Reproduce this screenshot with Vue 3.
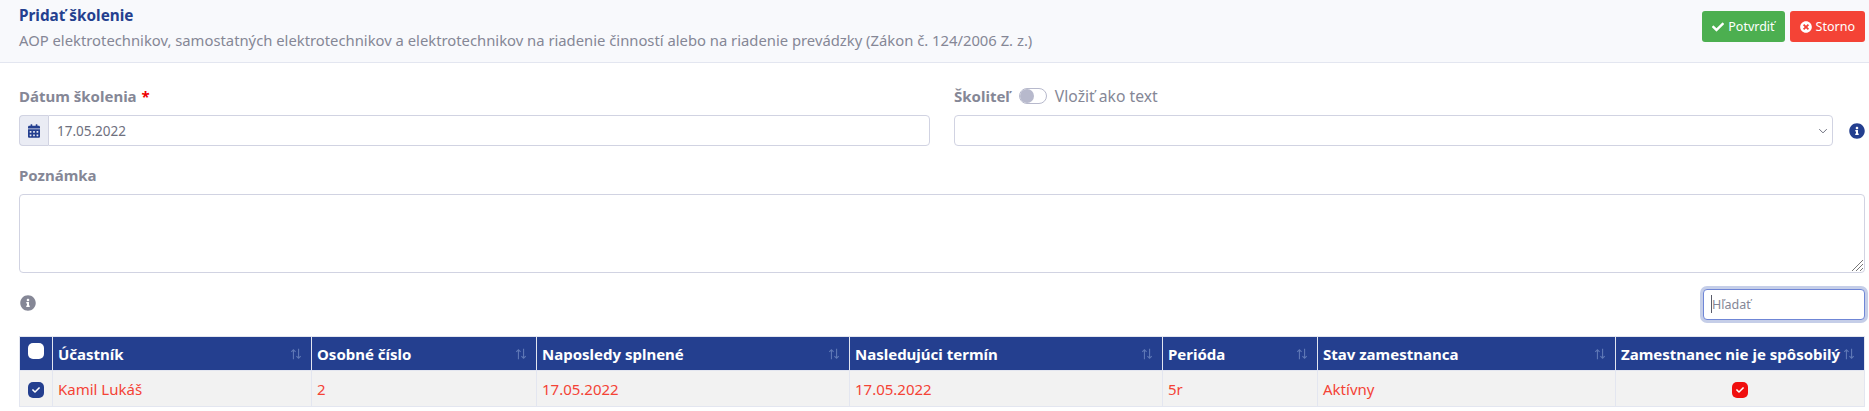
<script setup>
const icons = {
  check: "M173.898 439.404l-166.4-166.4c-9.997-9.997-9.997-26.206 0-36.204l36.203-36.204c9.997-9.998 26.207-9.998 36.204 0L192 312.69 432.095 72.596c9.997-9.997 26.207-9.997 36.204 0l36.203 36.204c9.997 9.997 9.997 26.206 0 36.204l-294.4 294.401c-9.998 9.997-26.207 9.997-36.204-.001z",
  times: "M256 8C119 8 8 119 8 256s111 248 248 248 248-111 248-248S393 8 256 8zm121.6 313.1c4.7 4.7 4.7 12.3 0 17L338 377.6c-4.7 4.7-12.3 4.7-17 0L256 312l-65.1 65.6c-4.7 4.7-12.3 4.7-17 0L134.4 338c-4.7-4.7-4.7-12.3 0-17l65.6-65-65.6-65.1c-4.7-4.7-4.7-12.3 0-17l39.6-39.6c4.7-4.7 12.3-4.7 17 0l65 65.7 65.1-65.6c4.7-4.7 12.3-4.7 17 0l39.6 39.6c4.7 4.7 4.7 12.3 0 17L312 256l65.6 65.1z",
  info: "M256 8C119.043 8 8 119.083 8 256c0 136.997 111.043 248 248 248s248-111.003 248-248C504 119.083 392.957 8 256 8zm0 110c23.196 0 42 18.804 42 42s-18.804 42-42 42-42-18.804-42-42 18.804-42 42-42zm56 254c0 6.627-5.373 12-12 12h-88c-6.627 0-12-5.373-12-12v-24c0-6.627 5.373-12 12-12h12v-64h-12c-6.627 0-12-5.373-12-12v-24c0-6.627 5.373-12 12-12h64c6.627 0 12 5.373 12 12v100h12c6.627 0 12 5.373 12 12v24z",
  calendar: "M0 464c0 26.5 21.5 48 48 48h352c26.5 0 48-21.5 48-48V192H0v272zm320-196c0-6.6 5.4-12 12-12h40c6.6 0 12 5.4 12 12v40c0 6.6-5.4 12-12 12h-40c-6.6 0-12-5.4-12-12v-40zm0 128c0-6.6 5.4-12 12-12h40c6.6 0 12 5.4 12 12v40c0 6.6-5.4 12-12 12h-40c-6.6 0-12-5.4-12-12v-40zM192 268c0-6.6 5.4-12 12-12h40c6.6 0 12 5.4 12 12v40c0 6.6-5.4 12-12 12h-40c-6.6 0-12-5.4-12-12v-40zm0 128c0-6.6 5.4-12 12-12h40c6.6 0 12 5.4 12 12v40c0 6.6-5.4 12-12 12h-40c-6.6 0-12-5.4-12-12v-40zM64 268c0-6.6 5.4-12 12-12h40c6.6 0 12 5.4 12 12v40c0 6.6-5.4 12-12 12H76c-6.6 0-12-5.4-12-12v-40zm0 128c0-6.6 5.4-12 12-12h40c6.6 0 12 5.4 12 12v40c0 6.6-5.4 12-12 12H76c-6.6 0-12-5.4-12-12v-40zM400 64h-48V16c0-8.8-7.2-16-16-16h-32c-8.8 0-16 7.2-16 16v48H160V16c0-8.8-7.2-16-16-16h-32c-8.8 0-16 7.2-16 16v48H48C21.5 64 0 85.5 0 112v48h448v-48c0-26.5-21.5-48-48-48z",
};

const columns = [
  { label: "Účastník", width: 259 },
  { label: "Osobné číslo", width: 225 },
  { label: "Naposledy splnené", width: 313 },
  { label: "Nasledujúci termín", width: 313 },
  { label: "Perióda", width: 155 },
  { label: "Stav zamestnanca", width: 298 },
  { label: "Zamestnanec nie je spôsobilý", width: 249 },
];

const row = ["Kamil Lukáš", "2", "17.05.2022", "17.05.2022", "5r", "Aktívny"];
</script>

<template>
  <div class="page">
    <header class="head">
      <div>
        <h1>Pridať školenie</h1>
        <p>AOP elektrotechnikov, samostatných elektrotechnikov a elektrotechnikov na riadenie činností alebo na riadenie prevádzky (Zákon č. 124/2006 Z. z.)</p>
      </div>
      <div class="actions">
        <button class="btn green">
          <svg viewBox="0 0 512 512"><path :d="icons.check" /></svg>Potvrdiť
        </button>
        <button class="btn red">
          <svg viewBox="0 0 512 512"><path :d="icons.times" /></svg>Storno
        </button>
      </div>
    </header>

    <section class="form">
      <div class="cols">
        <div class="field">
          <label class="lbl">Dátum školenia <span class="req">*</span></label>
          <div class="group">
            <span class="addon">
              <svg viewBox="0 0 448 512"><path :d="icons.calendar" /></svg>
            </span>
            <input class="ctl date" type="text" value="17.05.2022" />
          </div>
        </div>
        <div class="field">
          <div class="lbl">
            <label>Školiteľ</label>
            <span class="toggle"><i></i></span>
            <span class="hint">Vložiť ako text</span>
          </div>
          <div class="sel-row">
            <div class="sel">
              <select class="ctl"></select>
              <svg class="chev" viewBox="0 0 16 16"><path d="M2 5l6 6 6-6" /></svg>
            </div>
            <svg class="info blue" viewBox="0 0 512 512"><path :d="icons.info" /></svg>
          </div>
        </div>
      </div>

      <div class="note">
        <label class="lbl">Poznámka</label>
        <div class="area-wrap">
          <textarea class="ctl area"></textarea>
          <svg class="grip" viewBox="0 0 14 14">
            <path d="M13 2L2 13M13 6l-7 7M13 10l-3 3" />
          </svg>
        </div>
      </div>

      <div class="tools">
        <svg class="info gray" viewBox="0 0 512 512"><path :d="icons.info" /></svg>
        <div class="find-wrap">
          <input class="ctl find" type="text" placeholder="Hľadať" />
          <span class="caret"></span>
        </div>
      </div>

      <table>
        <colgroup>
          <col style="width: 33px" />
          <col v-for="c in columns" :key="c.label" :style="{ width: c.width + 'px' }" />
        </colgroup>
        <thead>
          <tr>
            <th class="chk"><span class="box white"></span></th>
            <th v-for="c in columns" :key="c.label">
              <div class="th">
                <span>{{ c.label }}</span>
                <svg class="sort" viewBox="0 0 14 14">
                  <path d="M4 13V2M1.5 4.5L4 2l2.5 2.5" />
                  <path d="M10 1v11M7.5 9.5L10 12l2.5-2.5" />
                </svg>
              </div>
            </th>
          </tr>
        </thead>
        <tbody>
          <tr>
            <td class="chk">
              <span class="box navy"><svg viewBox="0 0 512 512"><path :d="icons.check" /></svg></span>
            </td>
            <td v-for="(v, i) in row" :key="i">{{ v }}</td>
            <td class="center">
              <span class="box danger"><svg viewBox="0 0 512 512"><path :d="icons.check" /></svg></span>
            </td>
          </tr>
        </tbody>
      </table>
    </section>
  </div>
</template>

<style>
html,
body {
  margin: 0;
  background: #fff;
  overflow: hidden;
}
</style>

<style scoped>
.page {
  font-family: "Noto Sans", "Open Sans", sans-serif;
  font-size: 15px;
  color: #858796;
}

.head {
  display: flex;
  justify-content: space-between;
  height: 63px;
  box-sizing: border-box;
  padding: 4px 4px 0 19px;
  background: #f8f9fc;
  border-bottom: 1px solid #e3e6f0;
}

.head h1 {
  margin: 0;
  font-size: 15.3px;
  line-height: 22px;
  font-weight: 700;
  color: #243f8f;
}

.head p {
  margin: 3px 0 0;
  font-size: 14.8px;
  line-height: 22px;
  color: #858796;
}

.actions {
  display: flex;
  gap: 5px;
  padding-top: 7px;
}

.btn {
  display: flex;
  align-items: center;
  gap: 4px;
  height: 31px;
  padding: 0 10px;
  border: 0;
  border-radius: 3px;
  color: #fff;
  font: inherit;
  font-size: 12.5px;
}

.btn svg {
  width: 12px;
  height: 12px;
  fill: #fff;
}

.green {
  background: #4caf50;
}

.red {
  background: #f44336;
}

.form {
  padding: 22px 4px 0 19px;
}

.cols {
  display: grid;
  grid-template-columns: 911px 1fr;
  gap: 24px;
}

.lbl {
  display: flex;
  align-items: center;
  gap: 5px;
  height: 22px;
  margin-bottom: 8px;
  font-weight: 700;
  color: #858796;
}

.req {
  color: #e00;
}

.hint {
  margin-left: 3px;
  font-weight: 400;
  font-size: 15.7px;
}

.toggle {
  display: block;
  width: 28px;
  height: 16px;
  margin-left: 4px;
  box-sizing: border-box;
  border: 1px solid #b7b9cc;
  border-radius: 8px;
  background: #fff;
}

.toggle i {
  display: block;
  width: 14px;
  height: 14px;
  border-radius: 50%;
  background: #b7b9cc;
}

.ctl {
  display: block;
  box-sizing: border-box;
  width: 100%;
  height: 31px;
  padding: 0 8px;
  border: 1px solid #d1d3e2;
  border-radius: 4px;
  background: #fff;
  color: #6e707e;
  font: inherit;
  font-size: 13.5px;
  outline: none;
}

.group {
  display: flex;
}

.addon {
  display: flex;
  align-items: center;
  justify-content: center;
  flex: none;
  width: 29px;
  height: 31px;
  box-sizing: border-box;
  border: 1px solid #d1d3e2;
  border-right: 0;
  border-radius: 4px 0 0 4px;
  background: #eaecf4;
}

.addon svg {
  width: 12px;
  height: 14px;
  fill: #243f8f;
}

.date {
  border-radius: 0 4px 4px 0;
}

.sel-row {
  display: flex;
  align-items: center;
  justify-content: space-between;
}

.sel {
  position: relative;
  width: 879px;
}

.sel select {
  appearance: none;
}

.chev {
  position: absolute;
  right: 5px;
  top: 11px;
  width: 10px;
  height: 10px;
  fill: none;
  stroke: #6e707e;
  stroke-width: 1.6;
}

.info {
  width: 16px;
  height: 16px;
}

.blue {
  fill: #243f8f;
}

.gray {
  fill: #858796;
}

.note {
  margin-top: 18px;
}

.area-wrap {
  position: relative;
  margin-top: 8px;
}

.note .lbl {
  margin-bottom: 0;
}

.area {
  height: 79px;
  padding: 6px 8px;
  resize: none;
}

.grip {
  position: absolute;
  right: 1px;
  bottom: 1px;
  width: 14px;
  height: 14px;
  fill: none;
  stroke: #777;
  stroke-width: 1;
}

.tools {
  display: flex;
  align-items: flex-start;
  justify-content: space-between;
  height: 47px;
  margin-top: 16px;
  padding-left: 1px;
}

.tools .info {
  margin-top: 6px;
}

.find-wrap {
  position: relative;
  width: 162px;
}

.find {
  height: 31px;
  font-size: 12.5px;
  border-color: #6f86d6;
  box-shadow: 0 0 0 3px #c5cee8;
}

.find::placeholder {
  color: #858796;
  opacity: 1;
}

.caret {
  position: absolute;
  left: 8px;
  top: 6px;
  width: 1px;
  height: 18px;
  background: #5a5c69;
}

table {
  table-layout: fixed;
  width: 1845px;
  border-collapse: collapse;
  font-size: 15px;
}

th {
  height: 34px;
  padding: 0 9px 0 5px;
  box-sizing: border-box;
  background: #243f8f;
  border: 1px solid #e3e6f0;
  color: #fff;
  font-weight: 700;
  text-align: left;
  white-space: nowrap;
}

.th {
  display: flex;
  align-items: center;
  justify-content: space-between;
}

.sort {
  flex: none;
  width: 12px;
  height: 12px;
  fill: none;
  stroke: #5f78b6;
  stroke-width: 1.3;
}

td {
  height: 36px;
  padding: 0 5px;
  box-sizing: border-box;
  background: #f2f2f2;
  border: 1px solid #e3e6f0;
  color: #f44336;
}

.chk,
.center {
  text-align: center;
  padding: 0;
}

th.chk {
  vertical-align: top;
  padding: 6px 0 0;
  line-height: 0;
}

.box {
  display: inline-flex;
  align-items: center;
  justify-content: center;
  width: 16px;
  height: 16px;
  border-radius: 5px;
  vertical-align: middle;
}

.box svg {
  width: 8px;
  height: 8px;
  fill: #fff;
}

.white {
  background: #fff;
}

.navy {
  background: #243f8f;
}

.danger {
  background: #f00f0f;
}
</style>
